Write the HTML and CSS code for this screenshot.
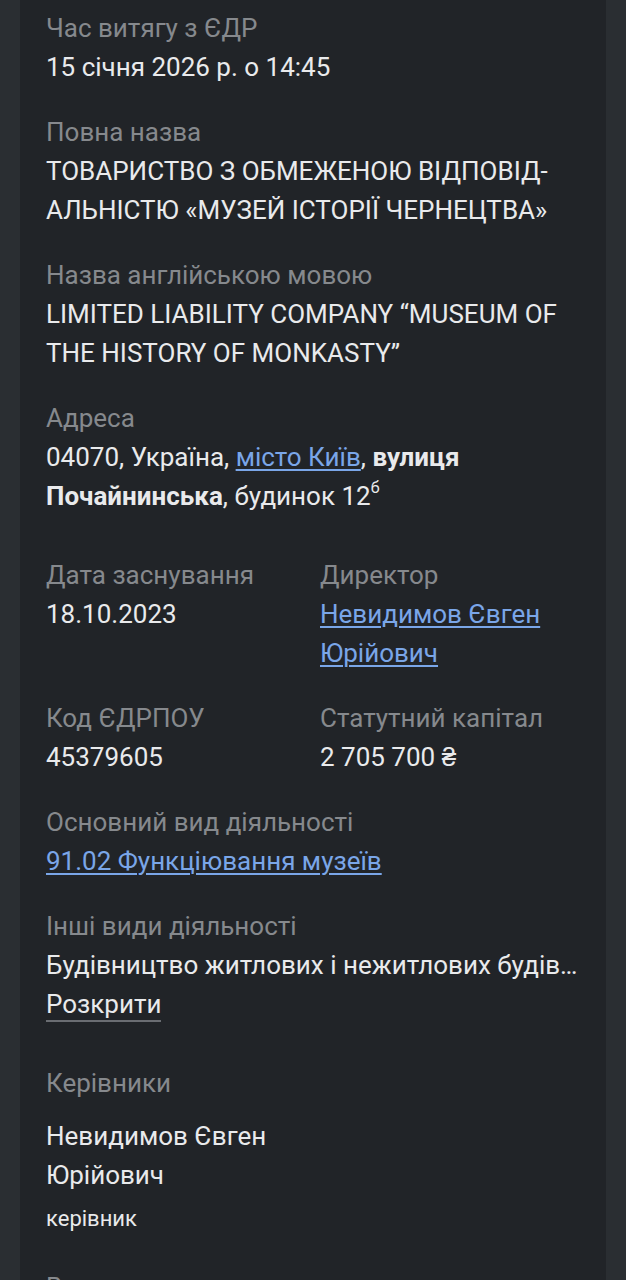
FILE: index.html
```html
<!DOCTYPE html>
<html lang="uk">

<head>
    <meta charset="UTF-8">
    <meta name="viewport" content="width=device-width, initial-scale=1.0">
    <title>ТОВ «Музей історії чернецтва»</title>
    <link rel="stylesheet" href="styles.css">
</head>

<body>
    <main class="card">
        <div class="field">
            <div class="label">Час витягу з ЄДР</div>
            <div class="value">15 січня 2026 р. о 14:45</div>
        </div>
        <div class="field">
            <div class="label">Повна назва</div>
            <div class="value">ТОВАРИСТВО З ОБМЕЖЕНОЮ ВІДПОВІД-<br>АЛЬНІСТЮ «МУЗЕЙ ІСТОРІЇ ЧЕРНЕЦТВА»</div>
        </div>
        <div class="field">
            <div class="label">Назва англійською мовою</div>
            <div class="value">LIMITED LIABILITY COMPANY “MUSEUM OF THE HISTORY OF MONKASTY”</div>
        </div>
        <div class="field field-wide">
            <div class="label">Адреса</div>
            <div class="value">04070, Україна, <a href="#">місто Київ</a>, <b>вулиця</b> <b>Почайнинська</b>, будинок 12<sup>б</sup></div>
        </div>

        <div class="grid">
            <div class="field">
                <div class="label">Дата заснування</div>
                <div class="value">18.10.2023</div>
            </div>
            <div class="field">
                <div class="label">Директор</div>
                <div class="value"><a href="#">Невидимов Євген Юрійович</a></div>
            </div>
            <div class="field">
                <div class="label">Код ЄДРПОУ</div>
                <div class="value">45379605</div>
            </div>
            <div class="field">
                <div class="label">Статутний капітал</div>
                <div class="value">2 705 700 ₴</div>
            </div>
        </div>

        <div class="field">
            <div class="label">Основний вид діяльності</div>
            <div class="value"><a href="#">91.02 Функціювання музеїв</a></div>
        </div>
        <div class="field field-wide">
            <div class="label">Інші види діяльності</div>
            <div class="value clamp">Будівництво житлових і нежитлових будівель</div>
            <button class="expand-btn">Розкрити</button>
        </div>

        <section class="people">
            <div class="label">Керівники</div>
            <ul class="people-list">
                <li>
                    <div class="person-name">Невидимов Євген<br>Юрійович</div>
                    <div class="person-role">керівник</div>
                </li>
            </ul>
        </section>

        <section class="people">
            <div class="label">Власники</div>
        </section>
    </main>
</body>

</html>
```

FILE: styles.css
```css
* {
    margin: 0;
    padding: 0;
    box-sizing: border-box;
}

body {
    font-family: 'Roboto', 'Liberation Sans', sans-serif;
    background: #2a2e32;
    color: #e9eaec;
    font-size: 26px;
    line-height: 39px;
}

.card {
    margin: 0 20px;
    padding: 9px 26px 40px;
    background: #212428;
    min-height: 1400px;
}

.field {
    margin-bottom: 26px;
}

.field-wide {
    margin-bottom: 40px;
}

.label {
    color: #86898d;
}

.value {
    color: #e9eaec;
}

.value b {
    font-weight: 700;
}

.value sup {
    font-size: 16px;
    line-height: 1;
    vertical-align: 12px;
}

a {
    color: #7aa6e8;
    text-decoration: underline;
    text-underline-offset: 3px;
    text-decoration-thickness: 2px;
}

.grid {
    display: grid;
    grid-template-columns: 1fr 1fr;
    column-gap: 14px;
}

.clamp {
    white-space: nowrap;
    overflow: hidden;
    text-overflow: ellipsis;
}

.expand-btn {
    background: none;
    border: none;
    border-bottom: 2px solid #6a6d72;
    color: #e9eaec;
    font: inherit;
    line-height: 32px;
    cursor: pointer;
}

.people {
    margin-bottom: 26px;
}

.people-list {
    list-style: none;
    margin-top: 14px;
}

.person-name {
    color: #e9eaec;
}

.person-role {
    font-size: 22px;
    line-height: 47px;
    color: #e9eaec;
}
```
